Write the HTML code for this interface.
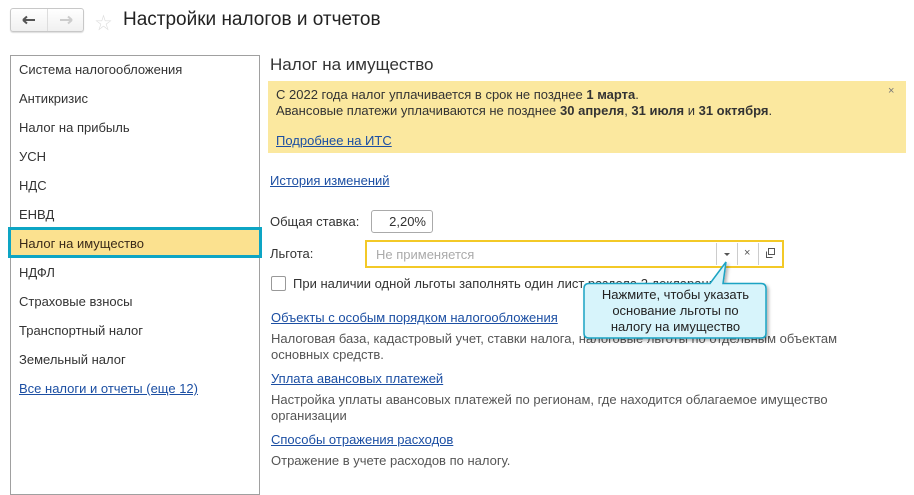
<!DOCTYPE html>
<html><head><meta charset="utf-8"><style>
*{margin:0;padding:0;box-sizing:border-box}
html,body{width:914px;height:476px}
body{background:#fff;font-family:"Liberation Sans","Noto Sans CJK SC",sans-serif;color:#333;position:relative;overflow:hidden;font-size:13px}
.a{position:absolute;white-space:nowrap}
.lnk{color:#1c4fa3!important;text-decoration:underline}
.nav{left:10px;top:8px;width:74px;height:24px;border:1px solid #c8c8c8;border-radius:3px;background:linear-gradient(#fff,#f0f0f0);box-shadow:0 1px 1px #ddd}
.left{left:10px;top:55px;width:250px;height:440px;border:1px solid #a0a0a0}
.li{left:19px;font-size:13px;color:#333}
.gray{color:#555}
</style></head><body>
<div class="a nav"><div style="position:absolute;left:36px;top:0;width:1px;height:22px;background:#ddd"></div>
<svg class="a" style="left:11px;top:6px" width="14" height="10"><path d="M1 5H13M1 5L5 1.5M1 5L5 8.5" stroke="#555" stroke-width="2" fill="none"/></svg>
<svg class="a" style="left:48px;top:6px" width="14" height="10"><path d="M1 5H13M13 5L9 1.5M13 5L9 8.5" stroke="#ccc" stroke-width="2" fill="none"/></svg>
</div>
<div class="a" style="left:95px;top:9px;font-size:17px;color:#ddd">☆</div>
<div class="a" style="left:123px;top:9px;font-size:19px;color:#222">Настройки налогов и отчетов</div>

<div class="a left"></div>
<div class="a li" style="top:62px">Система налогообложения</div>
<div class="a li" style="top:91px">Антикризис</div>
<div class="a li" style="top:120px">Налог на прибыль</div>
<div class="a li" style="top:149px">УСН</div>
<div class="a li" style="top:178px">НДС</div>
<div class="a li" style="top:207px">ЕНВД</div>
<div class="a" style="left:8px;top:227px;width:254px;height:31px;background:#fbe18f;border:3px solid #0da5c4"></div>
<div class="a li" style="top:236px;color:#3a2a1a">Налог на имущество</div>
<div class="a li" style="top:265px">НДФЛ</div>
<div class="a li" style="top:294px">Страховые взносы</div>
<div class="a li" style="top:323px">Транспортный налог</div>
<div class="a li" style="top:352px">Земельный налог</div>
<div class="a li lnk" style="top:381px">Все налоги и отчеты (еще 12)</div>

<div class="a" style="left:270px;top:55px;font-size:17px;color:#333">Налог на имущество</div>
<div class="a" style="left:268px;top:81px;width:638px;height:72px;background:#fbe89f"></div>
<div class="a" style="left:276px;top:87px;line-height:16px;color:#333">С 2022 года налог уплачивается в срок не позднее <b>1 марта</b>.<br>Авансовые платежи уплачиваются не позднее <b>30 апреля</b>, <b>31 июля</b> и <b>31 октября</b>.</div>
<div class="a" style="left:888px;top:85px;font-size:11px;color:#777">×</div>
<div class="a lnk" style="left:276px;top:133px">Подробнее на ИТС</div>
<div class="a lnk" style="left:270px;top:173px">История изменений</div>

<div class="a" style="left:270px;top:214px">Общая ставка:</div>
<div class="a" style="left:371px;top:210px;width:62px;height:23px;border:1px solid #aaa;border-radius:3px;text-align:right;padding:3px 6px 0 0;color:#333">2,20%</div>
<div class="a" style="left:270px;top:246px">Льгота:</div>
<div class="a" style="left:365px;top:240px;width:419px;height:28px;border:2px solid #f3c927;background:#fff"></div>
<div class="a" style="left:376px;top:247px;color:#aaa">Не применяется</div>
<div class="a" style="left:716px;top:243px;width:1px;height:22px;background:#ccc"></div>
<div class="a" style="left:737px;top:243px;width:1px;height:22px;background:#ccc"></div>
<div class="a" style="left:758px;top:243px;width:1px;height:22px;background:#ccc"></div>
<div class="a" style="left:724px;top:253px;border-left:3px solid transparent;border-right:3px solid transparent;border-top:3px solid #555"></div>
<div class="a" style="left:744px;top:247px;font-size:11px;color:#555">×</div>
<svg class="a" style="left:765px;top:248px" width="11" height="11"><rect x="3.5" y="0.5" width="6" height="6" fill="none" stroke="#555"/><path d="M1.5 3.5v6h6" fill="none" stroke="#555"/></svg>

<div class="a" style="left:271px;top:276px;width:15px;height:15px;border:1px solid #999;border-radius:2px"></div>
<div class="a" style="left:293px;top:276px">При наличии одной льготы заполнять один лист раздела 2 декларации</div>

<div class="a lnk" style="left:271px;top:310px">Объекты с особым порядком налогообложения</div>
<div class="a gray" style="left:271px;top:331px;line-height:16px">Налоговая база, кадастровый учет, ставки налога, налоговые льготы по отдельным объектам<br>основных средств.</div>
<div class="a lnk" style="left:271px;top:371px">Уплата авансовых платежей</div>
<div class="a gray" style="left:271px;top:392px;line-height:16px">Настройка уплаты авансовых платежей по регионам, где находится облагаемое имущество<br>организации</div>
<div class="a lnk" style="left:271px;top:432px">Способы отражения расходов</div>
<div class="a gray" style="left:271px;top:453px">Отражение в учете расходов по налогу.</div>

<svg class="a" style="left:578px;top:258px" width="200" height="90">
<defs><filter id="s"><feDropShadow dx="2" dy="2" stdDeviation="1.5" flood-color="#000" flood-opacity="0.3"/></filter></defs>
<path d="M11 25.5 H132 L148 4 L145 25.5 H183 Q188 25.5 188 30.5 V75 Q188 80 183 80 H11 Q6 80 6 75 V30.5 Q6 25.5 11 25.5Z" fill="#d7f4fb" stroke="#1aa3c3" stroke-width="1.5" filter="url(#s)"/>
</svg>
<div class="a" style="left:583px;top:287px;width:185px;text-align:center;line-height:16px;color:#222">Нажмите, чтобы указать<br>основание льготы по<br>налогу на имущество</div>
</body></html>
